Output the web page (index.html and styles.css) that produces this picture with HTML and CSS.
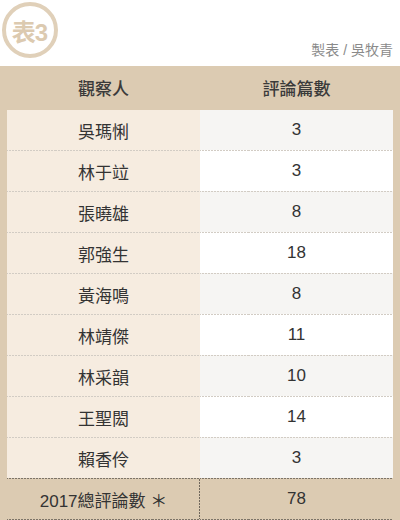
FILE: index.html
```html
<!DOCTYPE html>
<html lang="zh-Hant">
<head>
<meta charset="utf-8">
<link rel="stylesheet" href="styles.css">
</head>
<body>
<div class="top">
  <div class="badge">表3</div>
  <div class="credit">製表 / 吳牧青</div>
</div>
<div class="panel">
  <div class="head">
    <div class="hcell">觀察人</div>
    <div class="hcell">評論篇數</div>
  </div>
  <div class="rows">
    <div class="row alt"><div class="name">吳瑪悧</div><div class="num">3</div></div>
    <div class="row"><div class="name">林于竝</div><div class="num">3</div></div>
    <div class="row alt"><div class="name">張曉雄</div><div class="num">8</div></div>
    <div class="row"><div class="name">郭強生</div><div class="num">18</div></div>
    <div class="row alt"><div class="name">黃海鳴</div><div class="num">8</div></div>
    <div class="row"><div class="name">林靖傑</div><div class="num">11</div></div>
    <div class="row alt"><div class="name">林采韻</div><div class="num">10</div></div>
    <div class="row"><div class="name">王聖閎</div><div class="num">14</div></div>
    <div class="row alt"><div class="name">賴香伶</div><div class="num">3</div></div>
  </div>
  <div class="total">
    <div class="tcell tleft">2017總評論數 ＊</div>
    <div class="tcell">78</div>
  </div>
</div>
</body>
</html>
```
FILE: styles.css
```css
* { box-sizing: border-box; }
html, body { margin: 0; padding: 0; background: #fff; }
body {
  width: 400px;
  height: 520px;
  overflow: hidden;
  font-family: "Liberation Sans", "Noto Sans CJK TC", sans-serif;
  color: #333;
}
.top {
  height: 66px;
  display: flex;
  justify-content: space-between;
  align-items: flex-end;
  padding: 2px 7px 8px 2px;
}
.badge {
  align-self: flex-start;
  width: 56px;
  height: 56px;
  border: 4px solid #e0d0b9;
  border-radius: 50%;
  color: #dccab0;
  font-size: 24px;
  font-weight: 700;
  display: flex;
  align-items: center;
  justify-content: center;
  letter-spacing: -1px;
  padding-right: 1px;
}
.credit {
  font-size: 14px;
  color: #8a8a8a;
  line-height: 16px;
}
.panel {
  background: #dccbb2;
  padding: 0 7px;
  height: 454px;
}
.head {
  display: grid;
  grid-template-columns: 193px 193px;
  height: 44px;
}
.hcell {
  display: flex;
  align-items: center;
  justify-content: center;
  font-size: 17px;
  font-weight: 500;
  color: #3a3a3a;
  padding-bottom: 1px;
}
.rows { display: flex; flex-direction: column; }
.row {
  display: grid;
  grid-template-columns: 193px 193px;
  height: 41px;
}
.row:first-child { height: 40px; }
.name, .num {
  display: flex;
  align-items: center;
  justify-content: center;
  font-size: 17px;
  color: #333;
  border-top: 1px solid transparent;
  border-image: repeating-linear-gradient(90deg, #d2ccc4 0 2px, transparent 2px 3px) 1;
}
.row:first-child .name, .row:first-child .num { border-top: none; }
.name { background: #f6ece0; }
.num { background: #fff; }
.row.alt .num { background: #f6f5f3; }
.total {
  display: grid;
  grid-template-columns: 193px 193px;
  height: 42px;
}
.tcell {
  display: flex;
  align-items: center;
  justify-content: center;
  font-size: 17px;
  color: #333;
  border-top: 1px solid transparent;
  border-bottom: 1px solid transparent;
  border-image: repeating-linear-gradient(90deg, #7d7468 0 2px, transparent 2px 3px) 1;
}
.tleft {
  position: relative;
}
.tleft::after {
  content: "";
  position: absolute;
  top: 0;
  bottom: 0;
  right: 0;
  width: 1px;
  background: repeating-linear-gradient(180deg, #6f675c 0 2px, transparent 2px 3px);
}
```
